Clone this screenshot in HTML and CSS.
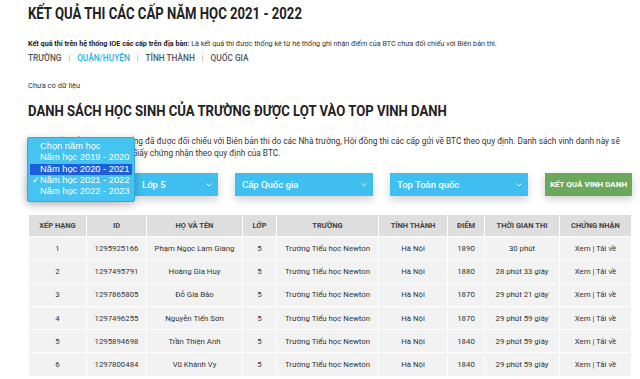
FILE: index.html
```html
<!DOCTYPE html>
<html lang="vi">
<head>
<meta charset="utf-8">
<title>Kết quả thi các cấp</title>
<link rel="stylesheet" href="styles.css">
</head>
<body>
<div class="page">
  <h1 class="title">KẾT QUẢ THI CÁC CẤP NĂM HỌC 2021 - 2022</h1>
  <p class="desc"><b>Kết quả thi trên hệ thống IOE các cấp trên địa bàn:</b> Là kết quả thi được thống kê từ hệ thống ghi nhận điểm của BTC chưa đối chiếu với Biên bản thi.</p>
  <nav class="levels">
    <a class="lvl">TRƯỜNG</a><span class="sep">|</span>
    <a class="lvl active">QUẬN/HUYỆN</a><span class="sep">|</span>
    <a class="lvl">TỈNH THÀNH</a><span class="sep">|</span>
    <a class="lvl">QUỐC GIA</a>
  </nav>
  <p class="empty">Chưa có dữ liệu</p>
  <h2 class="heading">DANH SÁCH HỌC SINH CỦA TRƯỜNG ĐƯỢC LỌT VÀO TOP VINH DANH</h2>
  <p class="note"><b>Lưu ý:</b> Kết quả thi trên hệ thống đã được đối chiếu với Biên bản thi do các Nhà trường, Hội đồng thi các cấp gửi về BTC theo quy định. Danh sách vinh danh này sẽ<br>là căn cứ để BTC xét và cấp Giấy chứng nhận theo quy định của BTC.</p>

  <div class="filters">
    <div class="select sel-year">
      <span>Năm học 2021 - 2022</span>
      <svg class="chev" width="6" height="4" viewBox="0 0 6 4"><polyline points="0.5,0.5 3,3 5.5,0.5" fill="none" stroke="#fff" stroke-width="1"/></svg>
      <ul class="popup">
        <li>Chọn năm học</li>
        <li>Năm học 2019 - 2020</li>
        <li class="hl">Năm học 2020 - 2021</li>
        <li class="checked"><span class="check">✓</span>Năm học 2021 - 2022</li>
        <li>Năm học 2022 - 2023</li>
      </ul>
    </div>
    <div class="select sel-class">
      <span>Lớp 5</span>
      <svg class="chev" width="6" height="4" viewBox="0 0 6 4"><polyline points="0.5,0.5 3,3 5.5,0.5" fill="none" stroke="#fff" stroke-width="1"/></svg>
    </div>
    <div class="select sel-wide">
      <span>Cấp Quốc gia</span>
      <svg class="chev" width="6" height="4" viewBox="0 0 6 4"><polyline points="0.5,0.5 3,3 5.5,0.5" fill="none" stroke="#fff" stroke-width="1"/></svg>
    </div>
    <div class="select sel-wide">
      <span>Top Toàn quốc</span>
      <svg class="chev" width="6" height="4" viewBox="0 0 6 4"><polyline points="0.5,0.5 3,3 5.5,0.5" fill="none" stroke="#fff" stroke-width="1"/></svg>
    </div>
    <button class="btn">KẾT QUẢ VINH DANH</button>
  </div>

  <table class="results">
    <colgroup>
      <col class="c1"><col class="c2"><col class="c3"><col class="c4"><col class="c5"><col class="c6"><col class="c7"><col class="c8"><col class="c9">
    </colgroup>
    <thead>
      <tr><th>XẾP HẠNG</th><th>ID</th><th>HỌ VÀ TÊN</th><th>LỚP</th><th>TRƯỜNG</th><th>TỈNH THÀNH</th><th>ĐIỂM</th><th>THỜI GIAN THI</th><th>CHỨNG NHẬN</th></tr>
    </thead>
    <tbody>
      <tr><td>1</td><td>1295925166</td><td>Phạm Ngọc Lam Giang</td><td>5</td><td>Trường Tiểu học Newton</td><td>Hà Nội</td><td>1890</td><td>30 phút</td><td>Xem | Tải về</td></tr>
      <tr><td>2</td><td>1297495791</td><td>Hoàng Gia Huy</td><td>5</td><td>Trường Tiểu học Newton</td><td>Hà Nội</td><td>1880</td><td>28 phút 33 giây</td><td>Xem | Tải về</td></tr>
      <tr><td>3</td><td>1297865805</td><td>Đỗ Gia Bảo</td><td>5</td><td>Trường Tiểu học Newton</td><td>Hà Nội</td><td>1870</td><td>29 phút 21 giây</td><td>Xem | Tải về</td></tr>
      <tr><td>4</td><td>1297496255</td><td>Nguyễn Tiến Sơn</td><td>5</td><td>Trường Tiểu học Newton</td><td>Hà Nội</td><td>1870</td><td>29 phút 59 giây</td><td>Xem | Tải về</td></tr>
      <tr><td>5</td><td>1295894698</td><td>Trần Thiện Anh</td><td>5</td><td>Trường Tiểu học Newton</td><td>Hà Nội</td><td>1840</td><td>29 phút 59 giây</td><td>Xem | Tải về</td></tr>
      <tr><td>6</td><td>1297800484</td><td>Vũ Khánh Vy</td><td>5</td><td>Trường Tiểu học Newton</td><td>Hà Nội</td><td>1840</td><td>29 phút 59 giây</td><td>Xem | Tải về</td></tr>
    </tbody>
  </table>
</div>
</body>
</html>
```

FILE: styles.css
```css
* { box-sizing: border-box; }
html, body { margin: 0; padding: 0; background: #fff; }
body {
  font-family: Roboto, "Liberation Sans", sans-serif;
  color: #333;
  overflow: hidden;
}
.page {
  padding: 0 8px 0 28px;
}
.title {
  margin: 0;
  padding-top: 4px;
  font-size: 16px;
  line-height: 20px;
  font-weight: 700;
  color: #222;
  white-space: nowrap;
  transform: scaleX(0.82);
  transform-origin: left center;
}
.desc {
  margin: 15px 0 0;
  font-size: 7.2px;
  line-height: 10px;
  color: #333;
  white-space: nowrap;
}
.desc b { font-weight: 700; color: #222; }
.levels {
  margin-top: 3px;
  font-size: 8.3px;
  line-height: 12px;
  font-weight: 500;
  color: #555;
  display: flex;
  align-items: center;
}
.lvl { color: #555; }
.lvl.active { color: #29aee6; }
.sep { margin: 0 7px; font-weight: 400; color: #888; font-size: 7px; }
.empty {
  margin: 17px 0 0;
  font-size: 7.5px;
  line-height: 10px;
  color: #333;
}
.heading {
  margin: 11px 0 0;
  font-size: 15.5px;
  line-height: 18px;
  font-weight: 700;
  color: #222;
  white-space: nowrap;
  transform: scaleX(0.846);
  transform-origin: left center;
}
.note {
  margin: 15px 0 0;
  font-size: 8.3px;
  line-height: 12px;
  color: #333;
  white-space: nowrap;
}
.note b { font-weight: 700; }
.filters {
  margin-top: 14px;
  display: flex;
  gap: 17px;
  align-items: stretch;
  height: 23px;
}
.select {
  position: relative;
  background: #3ebff0;
  color: #fff;
  font-size: 9.5px;
  font-weight: 500;
  display: flex;
  align-items: center;
  justify-content: space-between;
  padding: 0 6px 0 7px;
  box-shadow: 0 4px 9px rgba(0,0,0,0.18);
}
.sel-year { width: 90px; }
.sel-class { width: 83px; }
.sel-wide { width: 138px; }
.chev { display: block; }
.btn {
  width: 87px;
  border: 0;
  background: #6aa95b;
  color: #fff;
  font-family: Roboto, "Liberation Sans", sans-serif;
  font-size: 8px;
  font-weight: 700;
  padding: 0;
  box-shadow: 0 3px 8px rgba(0,0,0,0.2);
}
.popup {
  position: absolute;
  left: -1px;
  top: -36px;
  width: 108px;
  margin: 0;
  padding: 3px 2px 4px;
  list-style: none;
  background: #45c3f1;
  border: 1px solid #36a9da;
  border-radius: 2px;
  box-shadow: 0 3px 8px rgba(0,0,0,0.25);
  font-family: "Liberation Sans", Arial, sans-serif;
  font-size: 9.3px;
  font-weight: 400;
  z-index: 5;
}
.popup li {
  position: relative;
  height: 11.3px;
  line-height: 11.3px;
  padding-left: 10px;
  color: #fff;
  white-space: nowrap;
}
.popup li.hl { background: #1c5fd9; }
.check { position: absolute; left: 2px; top: 0; }
.results {
  margin-top: 18px;
  width: 603px;
  border-collapse: collapse;
  table-layout: fixed;
  font-size: 7.8px;
}
.c1 { width: 58px; } .c2 { width: 60px; } .c3 { width: 96px; } .c4 { width: 34px; }
.c5 { width: 102px; } .c6 { width: 69px; } .c7 { width: 37px; } .c8 { width: 75px; } .c9 { width: 72px; }
.results th, .results td {
  border: 1px solid #fff;
  text-align: center;
  white-space: nowrap;
  overflow: hidden;
  padding: 0;
}
.results th {
  background: #dedede;
  color: #444;
  font-weight: 700;
  height: 22px;
  font-size: 7.5px;
}
.results td {
  background: #f2f2f2;
  color: #333;
  height: 23.3px;
}
```
